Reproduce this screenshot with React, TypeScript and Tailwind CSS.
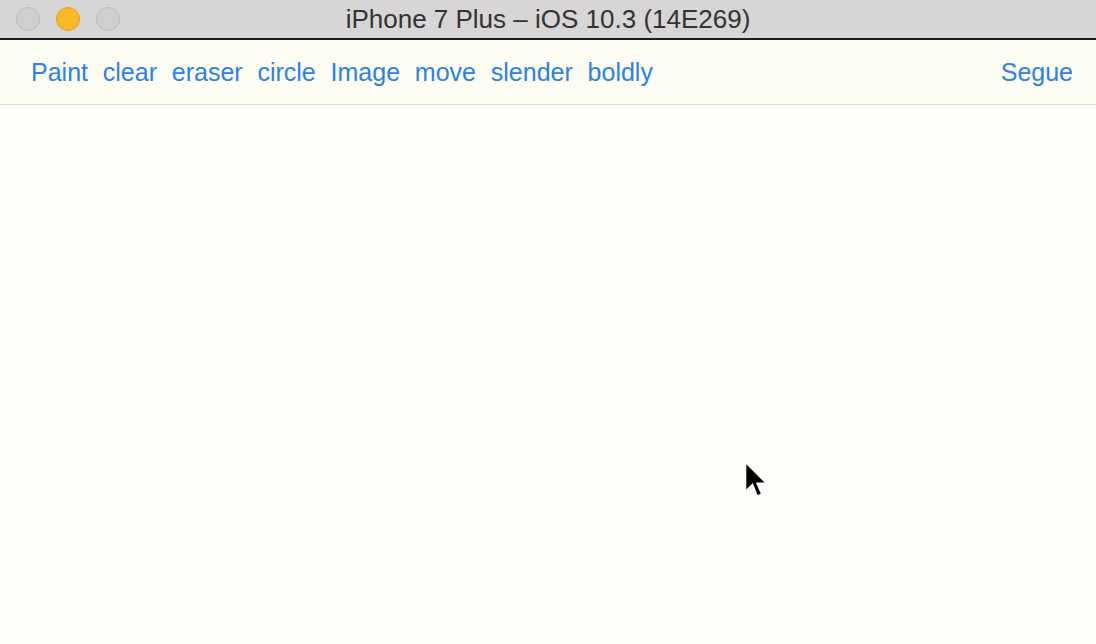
import React from "react";

const items = ["Paint", "clear", "eraser", "circle", "Image", "move", "slender", "boldly"];

export default function App() {
  return (
    <div className="w-[1096px] h-[644px] flex flex-col bg-[#fefefa] overflow-hidden relative" style={{ fontFamily: '"Liberation Sans", Arial, sans-serif' }}>
      <div className="h-[38px] bg-[#d7d5d5] flex items-center relative shrink-0">
        <div className="flex items-center gap-[16px] pl-[16px]">
          <div className="w-[24px] h-[24px] rounded-full bg-[#d0cfcf] border border-[#bdbcbc]" />
          <div className="w-[24px] h-[24px] rounded-full bg-[#fbb927] border border-[#e3a21a]" />
          <div className="w-[24px] h-[24px] rounded-full bg-[#d0cfcf] border border-[#bdbcbc]" />
        </div>
        <div className="absolute inset-0 flex items-center justify-center text-[26px] text-[#333333]">
          iPhone 7 Plus – iOS 10.3 (14E269)
        </div>
      </div>
      <div className="h-[2px] bg-[#1c1c1c] shrink-0" />
      <div className="h-[65px] bg-[#fdfdf3] border-b border-[#dcdcd6] flex items-center justify-between pl-[31px] pr-[23px] pt-[2px] shrink-0">
        <div className="flex items-center gap-[14.8px] text-[25px] text-[#2a82e2]">
          {items.map((t) => (
            <span key={t}>{t}</span>
          ))}
        </div>
        <span className="text-[25px] text-[#2a82e2]">Segue</span>
      </div>
      <div className="flex-1" />
      <svg className="absolute left-[743px] top-[461px]" width="26" height="40" viewBox="0 0 22 34">
        <path d="M2 1 L2 26 L8 20 L12 30 L16 28 L12 19 L20 19 Z" fill="#000" stroke="#fff" strokeWidth="1.5" />
      </svg>
    </div>
  );
}
